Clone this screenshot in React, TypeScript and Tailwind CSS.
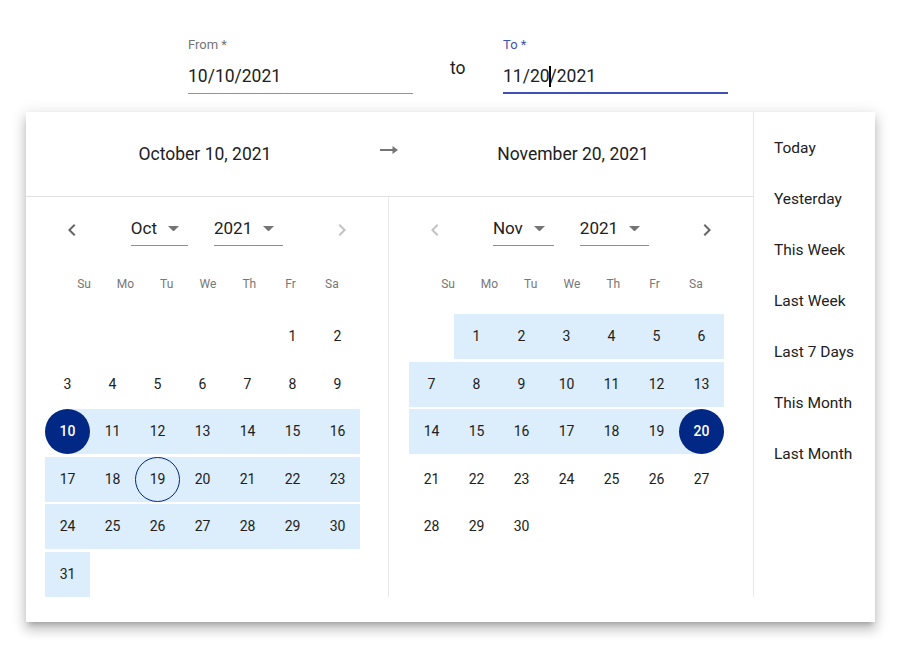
import React from "react";

const DOW = ["Su", "Mo", "Tu", "We", "Th", "Fr", "Sa"];
const PRESETS = ["Today", "Yesterday", "This Week", "Last Week", "Last 7 Days", "This Month", "Last Month"];

function ChevronLeft({ disabled }: { disabled?: boolean }) {
  return (
    <svg width="24" height="24" viewBox="0 0 24 24" className={disabled ? "fill-[#c2c2c2]" : "fill-[#666666]"}>
      <path d="M15.41 7.41L14 6l-6 6 6 6 1.41-1.41L10.83 12z" />
    </svg>
  );
}

function ChevronRight({ disabled }: { disabled?: boolean }) {
  return (
    <svg width="24" height="24" viewBox="0 0 24 24" className={disabled ? "fill-[#c2c2c2]" : "fill-[#666666]"}>
      <path d="M10 6L8.59 7.41 13.17 12l-4.58 4.59L10 18l6-6z" />
    </svg>
  );
}

function Select({ value }: { value: string }) {
  return (
    <div className="inline-flex items-center h-[33px] pt-[4px] pb-[5px] border-b border-[#8f8f8f] text-[17px] leading-[23px] text-[#212121]">
      <span>{value}</span>
      <svg className="ml-[11px] mr-[9px]" width="11" height="5.5" viewBox="0 0 10 5">
        <path d="M0 0l5 5 5-5z" fill="#757575" />
      </svg>
    </div>
  );
}

type MonthProps = {
  month: string;
  year: string;
  offset: number;
  count: number;
  from: number;
  to: number;
  start?: number;
  end?: number;
  today?: number;
  prevDisabled?: boolean;
  nextDisabled?: boolean;
  first?: boolean;
};

function Month(p: MonthProps) {
  const cells: (number | null)[] = [];
  for (let i = 0; i < p.offset; i++) cells.push(null);
  for (let d = 1; d <= p.count; d++) cells.push(d);
  while (cells.length % 7) cells.push(null);
  const rows: (number | null)[][] = [];
  for (let i = 0; i < cells.length; i += 7) rows.push(cells.slice(i, i + 7));

  return (
    <div className={p.first ? "w-[363px] border-r border-[#e8e8e8] pt-[16px]" : "flex-1 pt-[16px]"}>
      {/* nav */}
      <div className="flex items-center justify-between px-[34px]">
        <ChevronLeft disabled={p.prevDisabled} />
        <div className="flex items-center gap-[26px]">
          <Select value={p.month} />
          <Select value={p.year} />
        </div>
        <ChevronRight disabled={p.nextDisabled} />
      </div>

      {/* weekday labels */}
      <div className="flex justify-center mt-[28px] h-[20px] pl-[2px]">
        {DOW.map((d) => (
          <div key={d} className="w-[41.3px] text-center text-[12px] leading-[20px] text-[#777777]">
            {d}
          </div>
        ))}
      </div>

      {/* days */}
      <div className={"flex flex-col gap-[2.5px] mt-[20px] " + (p.first ? "pl-[19px]" : "pl-[20px]")}>
        {rows.map((row, ri) => (
          <div key={ri} className="flex">
            {row.map((d, ci) => {
              if (d === null) return <div key={ci} className="w-[45px] h-[45px]" />;
              const inRange = d >= p.from && d <= p.to;
              const isStart = d === p.start;
              const isEnd = d === p.end;
              const isToday = d === p.today;
              let bg = "";
              if (isStart) bg = "bg-[#dcedfc] rounded-l-full";
              else if (isEnd) bg = "bg-[#dcedfc] rounded-r-full";
              else if (inRange) bg = "bg-[#dcedfc]";
              let inner = "text-[#212121]";
              if (isStart || isEnd) inner = "bg-[#002884] text-white font-medium rounded-full";
              else if (isToday) inner = "border border-[#002884] rounded-full text-[#212121]";
              return (
                <div key={ci} className={"w-[45px] h-[45px] " + bg}>
                  <div className={"w-[45px] h-[45px] flex items-center justify-center text-[14px] " + inner}>
                    {d}
                  </div>
                </div>
              );
            })}
          </div>
        ))}
      </div>
    </div>
  );
}

function Field({ label, active, children }: { label: string; active?: boolean; children: React.ReactNode }) {
  return (
    <div className="w-[225px]">
      <div className={"text-[13px] leading-[16px] " + (active ? "text-[#3f51b5]" : "text-[#757575]")}>{label}</div>
      <div
        className={
          "mt-[8px] h-[33px] pt-[4px] text-[17.5px] leading-[23px] text-[#212121] " +
          (active ? "pb-[4px] border-b-2 border-[#3f51b5]" : "pb-[5px] border-b border-[#949494]")
        }
      >
        {children}
      </div>
    </div>
  );
}

export default function App() {
  return (
    <div className="w-[907px] h-[651px] bg-white font-['Roboto',sans-serif] text-[#212121] overflow-hidden">
      {/* INPUTS */}
      <div className="flex items-start pt-[37px] pl-[188px]">
        <Field label="From *">10/10/2021</Field>
        <div className="ml-[37px] mr-[36px] w-[17px] pt-[19px] text-[17.5px] leading-[24px]">to</div>
        <Field label="To *" active>
          11/20
          <span className="relative inline-block w-0 h-[18px] align-middle">
            <span className="absolute left-[-1px] top-[-2px] w-[2px] h-[21px] bg-black" />
          </span>
          /2021
        </Field>
      </div>

      {/* PICKER */}
      <div className="ml-[26px] mt-[18px] w-[849px] bg-white pb-[25px] shadow-[0px_5px_5px_-3px_rgba(0,0,0,0.2),0px_8px_10px_1px_rgba(0,0,0,0.14),0px_3px_14px_2px_rgba(0,0,0,0.12)]">
        <div className="flex h-[485px]">
          <div className="w-[727px] flex flex-col">
            {/* header */}
            <div className="h-[85px] shrink-0 border-b border-[#e0e0e0] flex items-center text-[17.5px]">
              <div className="flex-1 text-center pl-[4px]">October 10, 2021</div>
              <svg className="mb-[8px]" width="18" height="8" viewBox="0 0 18 8">
                <path d="M0 3h13v2H0z" fill="#757575" />
                <path d="M12.5 0L18 4l-5.5 4z" fill="#757575" />
              </svg>
              <div className="flex-1 text-center pr-[5px]">November 20, 2021</div>
            </div>

            {/* months */}
            <div className="flex flex-1">
              <Month first month="Oct" year="2021" offset={5} count={31} from={10} to={31} start={10} today={19} nextDisabled />
              <Month month="Nov" year="2021" offset={1} count={30} from={1} to={20} end={20} prevDisabled />
            </div>
          </div>

          {/* presets */}
          <div className="flex-1 border-l border-[#e8e8e8] pt-[11px] pl-[20px]">
            {PRESETS.map((p) => (
              <div key={p} className="h-[51px] flex items-center text-[15.5px] text-[#212121]">
                {p}
              </div>
            ))}
          </div>
        </div>
      </div>
    </div>
  );
}
